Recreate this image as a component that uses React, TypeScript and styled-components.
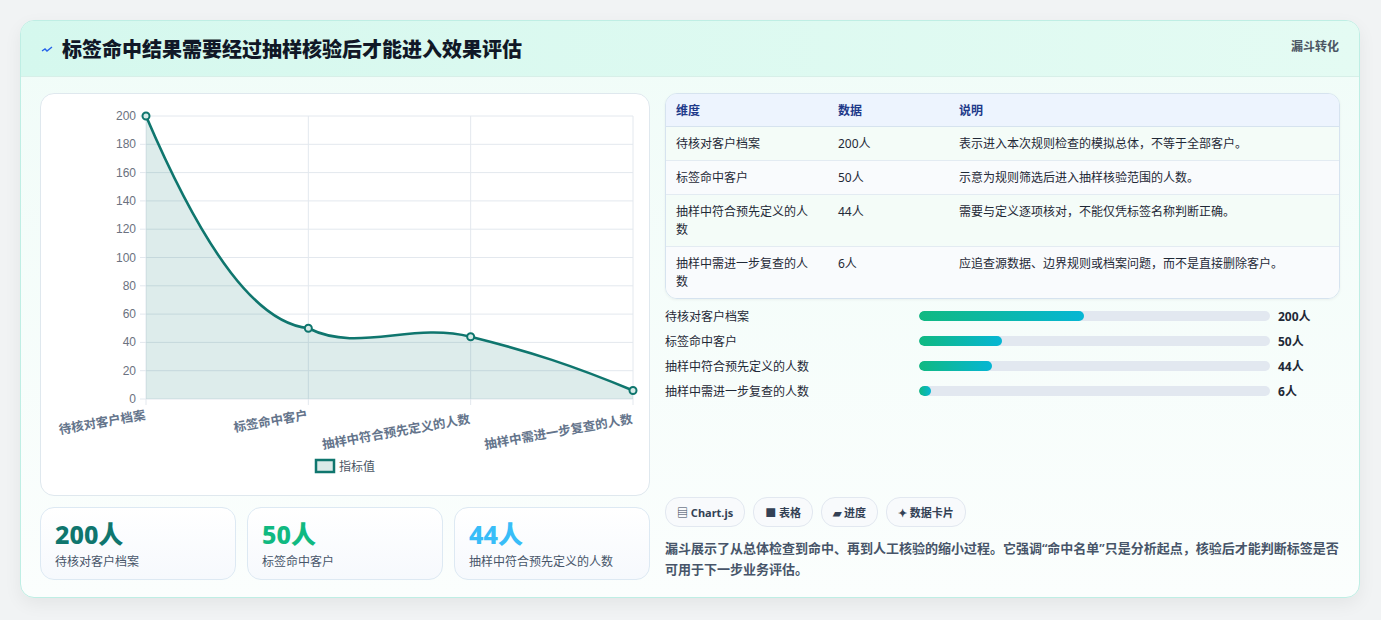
import { createGlobalStyle } from 'styled-components'
import styled from 'styled-components'

const GlobalStyle = createGlobalStyle`
  body {
    margin: 0;
    background: #f1f3f4;
    font-family: "Noto Sans", "Noto Sans CJK SC", sans-serif;
    color: #1f2937;
  }
`

const Page = styled.div`
  padding: 20px;
`

const Card = styled.div`
  width: 1340px;
  height: 578px;
  box-sizing: border-box;
  border: 1px solid #bfeee4;
  border-radius: 14px;
  background: linear-gradient(180deg, #f0fcf8 0%, #fbfefd 100%);
  box-shadow: 0 6px 18px rgba(0, 0, 0, 0.06);
  overflow: hidden;
  display: flex;
  flex-direction: column;
`

const Header = styled.div`
  height: 55px;
  flex: none;
  display: flex;
  align-items: center;
  justify-content: space-between;
  padding: 0 20px;
  background: linear-gradient(90deg, #d5f8ee 0%, #e4fbf3 100%);
  border-bottom: 1px solid #d7efe8;
`

const Title = styled.h1`
  margin: 0;
  font-size: 20px;
  font-weight: 800;
  color: #111827;
  display: flex;
  align-items: center;
  gap: 9px;
`

const Tag = styled.span`
  font-size: 12px;
  font-weight: 700;
  color: #4b5563;
  align-self: flex-start;
  margin-top: 16px;
`

const Body = styled.div`
  flex: 1;
  display: grid;
  grid-template-columns: 610px 1fr;
  gap: 15px;
  padding: 16px 19px 0 19px;
`

const Col = styled.div`
  display: flex;
  flex-direction: column;
`

const ChartBox = styled.div`
  height: 403px;
  box-sizing: border-box;
  border: 1px solid #dfe8ee;
  border-radius: 14px;
  background: #fff;
`

const Stats = styled.div`
  display: grid;
  grid-template-columns: repeat(3, 1fr);
  gap: 11px;
  margin-top: 11px;
`

const Stat = styled.div`
  height: 73px;
  box-sizing: border-box;
  border: 1px solid #dde9f3;
  border-radius: 14px;
  background: linear-gradient(180deg, #ffffff, #f6f9fd);
  padding: 10px 14px;
`

const StatValue = styled.div<{ $c: string }>`
  font-size: 25px;
  font-weight: 800;
  color: ${(p) => p.$c};
  line-height: 32px;
`

const StatLabel = styled.div`
  font-size: 12px;
  color: #475569;
  margin-top: 2px;
`

const Table = styled.table`
  width: 100%;
  border-collapse: separate;
  border-spacing: 0;
  border: 1px solid #d6e3ef;
  border-radius: 12px;
  overflow: hidden;
  font-size: 12px;
  box-shadow: 0 1px 3px rgba(0, 0, 0, 0.05);
`

const Th = styled.th<{ $w?: string }>`
  text-align: left;
  font-weight: 700;
  color: #1e3a8a;
  background: #edf4fe;
  height: 32px;
  padding: 0 10px;
  width: ${(p) => p.$w || 'auto'};
  border-bottom: 1px solid #d6e3ef;
`

const Td = styled.td`
  padding: 8px 10px 7px;
  color: #1f2937;
  vertical-align: top;
  line-height: 18px;
  border-bottom: 1px solid #e3ebf2;
  tr:last-child & {
    border-bottom: none;
  }
`

const Tr = styled.tr<{ $alt: boolean }>`
  background: ${(p) => (p.$alt ? '#f9fbfd' : '#f4fcf8')};
`

const Bars = styled.div`
  display: flex;
  flex-direction: column;
  gap: 7px;
  margin-top: 8px;
`

const BarRow = styled.div`
  display: grid;
  grid-template-columns: 246px 351px 1fr;
  gap: 8px;
  align-items: center;
  font-size: 12px;
  height: 18px;
`

const Track = styled.div`
  height: 10px;
  border-radius: 5px;
  background: #e2e8f0;
  overflow: hidden;
`

const Fill = styled.div`
  height: 100%;
  border-radius: 5px;
  background: linear-gradient(90deg, #10b981, #06b6d4);
`

const BarNum = styled.span`
  font-weight: 700;
`

const Chips = styled.div`
  display: flex;
  gap: 8px;
  margin-top: auto;
`

const Chip = styled.span`
  height: 28px;
  display: inline-flex;
  align-items: center;
  gap: 4px;
  padding: 0 11px;
  border: 1px solid #e2e8f0;
  border-radius: 14px;
  background: #f8fafc;
  font-size: 11px;
  font-weight: 700;
  color: #334155;
`

const Note = styled.p`
  margin: 11px 0 17px 0;
  font-size: 13px;
  line-height: 21px;
  color: #475569;
  font-weight: 600;
`

const rows = [
  ['待核对客户档案', '200人', '表示进入本次规则检查的模拟总体，不等于全部客户。'],
  ['标签命中客户', '50人', '示意为规则筛选后进入抽样核验范围的人数。'],
  ['抽样中符合预先定义的人数', '44人', '需要与定义逐项核对，不能仅凭标签名称判断正确。'],
  ['抽样中需进一步复查的人数', '6人', '应追查源数据、边界规则或档案问题，而不是直接删除客户。'],
]

const values = [200, 50, 44, 6]
const fills = [0.47, 0.236, 0.208, 0.035]

function Chart() {
  const x0 = 105
  const x1 = 592
  const yTop = 22
  const yBot = 305
  const xs = values.map((_, i) => x0 + ((x1 - x0) * i) / 3)
  const ys = values.map((v) => yBot - ((yBot - yTop) * v) / 200)
  const line = `M${xs[0]},${ys[0]} C${xs[0] + 60},${ys[0] + 140} ${xs[1] - 50},${ys[1] - 5} ${xs[1]},${ys[1]} C${xs[1] + 50},${ys[1] + 25} ${xs[2] - 60},${ys[2] - 15} ${xs[2]},${ys[2]} C${xs[2] + 60},${ys[2] + 15} ${xs[3] - 60},${ys[3] - 25} ${xs[3]},${ys[3]}`
  const labels = ['待核对客户档案', '标签命中客户', '抽样中符合预先定义的人数', '抽样中需进一步复查的人数']
  return (
    <svg width="610" height="403" viewBox="0 0 610 403" fontFamily="Liberation Sans, Noto Sans CJK SC, sans-serif">
      {Array.from({ length: 11 }).map((_, i) => {
        const y = yBot - ((yBot - yTop) * i) / 10
        return (
          <g key={i}>
            <line x1={x0 - 6} x2={x1} y1={y} y2={y} stroke="#e3e8ee" />
            <text x={x0 - 10} y={y + 4} fontSize="12" fill="#6b7280" textAnchor="end">
              {i * 20}
            </text>
          </g>
        )
      })}
      {xs.map((x, i) => (
        <line key={i} x1={x} x2={x} y1={yTop} y2={yBot + 6} stroke="#e3e8ee" />
      ))}
      <path d={`${line} L${xs[3]},${yBot} L${xs[0]},${yBot} Z`} fill="rgba(15,118,110,0.14)" />
      <path d={line} fill="none" stroke="#0f766e" strokeWidth="2.6" />
      {xs.map((x, i) => (
        <circle key={i} cx={x} cy={ys[i]} r="3.5" fill="#d7ebe8" stroke="#0f766e" strokeWidth="2" />
      ))}
      {labels.map((l, i) => {
        const ly = yBot + 20 + (i >= 2 ? 4 : 0)
        return (
          <text
            key={l}
            x={xs[i]}
            y={ly}
            fontSize="12.5"
            fontWeight="600"
            fill="#64748b"
            textAnchor="end"
            transform={`rotate(-10 ${xs[i]} ${ly})`}
          >
            {l}
          </text>
        )
      })}
      <rect x="275" y="366" width="18" height="12" fill="#dbeae8" stroke="#0f766e" strokeWidth="2.5" />
      <text x="298" y="377" fontSize="12" fill="#4b5563">
        指标值
      </text>
    </svg>
  )
}

export default function App() {
  return (
    <Page>
      <GlobalStyle />
      <Card>
        <Header>
          <Title>
            <svg width="12" height="12" viewBox="0 0 12 12">
              <path d="M1 8 L4 6 L6 8 L11 4" fill="none" stroke="#2563eb" strokeWidth="1.4" />
            </svg>
            标签命中结果需要经过抽样核验后才能进入效果评估
          </Title>
          <Tag>漏斗转化</Tag>
        </Header>
        <Body>
          <Col>
            <ChartBox>
              <Chart />
            </ChartBox>
            <Stats>
              <Stat>
                <StatValue $c="#0f766e">200人</StatValue>
                <StatLabel>待核对客户档案</StatLabel>
              </Stat>
              <Stat>
                <StatValue $c="#10b981">50人</StatValue>
                <StatLabel>标签命中客户</StatLabel>
              </Stat>
              <Stat>
                <StatValue $c="#38bdf8">44人</StatValue>
                <StatLabel>抽样中符合预先定义的人数</StatLabel>
              </Stat>
            </Stats>
          </Col>
          <Col>
            <Table>
              <thead>
                <tr>
                  <Th $w="142px">维度</Th>
                  <Th $w="101px">数据</Th>
                  <Th>说明</Th>
                </tr>
              </thead>
              <tbody>
                {rows.map((r, i) => (
                  <Tr key={r[0]} $alt={i % 2 === 1}>
                    <Td>{r[0]}</Td>
                    <Td>{r[1]}</Td>
                    <Td>{r[2]}</Td>
                  </Tr>
                ))}
              </tbody>
            </Table>
            <Bars>
              {values.map((v, i) => (
                <BarRow key={i}>
                  <span>{rows[i][0]}</span>
                  <Track>
                    <Fill style={{ width: `${fills[i] * 100}%` }} />
                  </Track>
                  <BarNum>{v}人</BarNum>
                </BarRow>
              ))}
            </Bars>
            <Chips>
              <Chip>▤ Chart.js</Chip>
              <Chip>■ 表格</Chip>
              <Chip>▰ 进度</Chip>
              <Chip>✦ 数据卡片</Chip>
            </Chips>
            <Note>
              漏斗展示了从总体检查到命中、再到人工核验的缩小过程。它强调“命中名单”只是分析起点，核验后才能判断标签是否可用于下一步业务评估。
            </Note>
          </Col>
        </Body>
      </Card>
    </Page>
  )
}
